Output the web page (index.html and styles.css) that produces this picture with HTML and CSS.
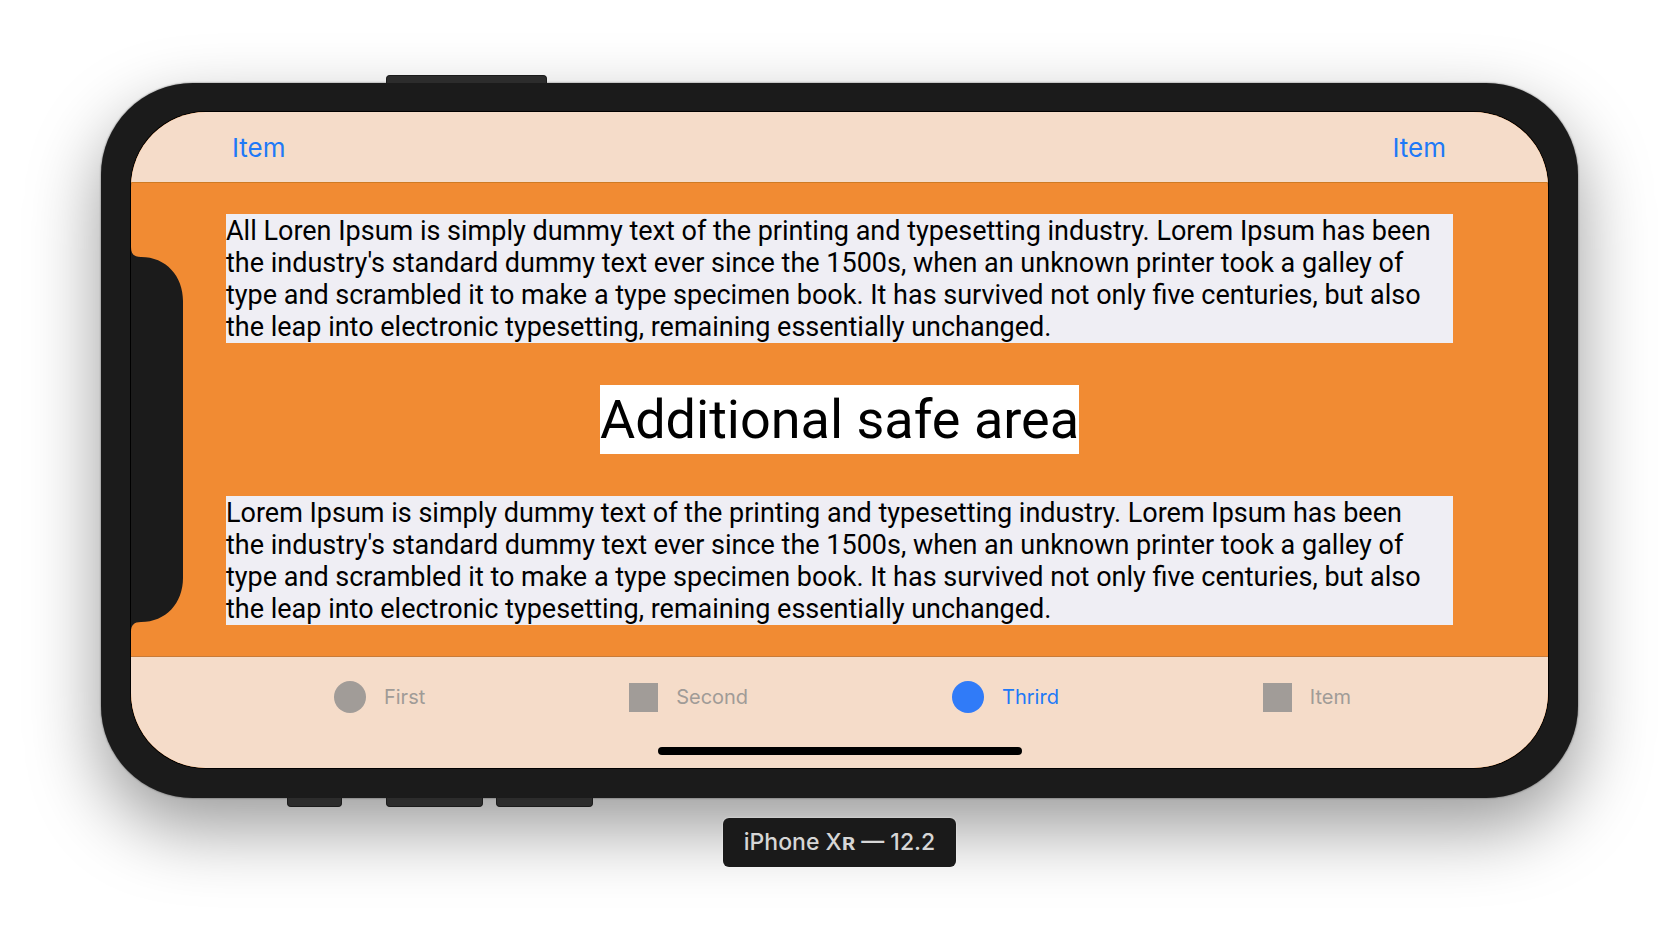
FILE: index.html
```html
<!DOCTYPE html>
<html lang="en">
<head>
<meta charset="utf-8">
<title>iPhone XR — 12.2</title>
<link rel="stylesheet" href="styles.css">
</head>
<body>
<main class="stage">
  <div class="phone">
    <span class="key key-side"></span>
    <span class="key key-mute"></span>
    <span class="key key-up"></span>
    <span class="key key-down"></span>
    <div class="screen">
      <header class="navbar">
        <button class="nav-item" type="button">Item</button>
        <button class="nav-item" type="button">Item</button>
      </header>
      <section class="content">
        <p class="copy">All Loren Ipsum is simply dummy text of the printing and typesetting industry. Lorem Ipsum has been<br>the industry's standard dummy text ever since the 1500s, when an unknown printer took a galley of<br>type and scrambled it to make a type specimen book. It has survived not only five centuries, but also<br>the leap into electronic typesetting, remaining essentially unchanged.</p>
        <h1 class="title">Additional safe area</h1>
        <p class="copy">Lorem Ipsum is simply dummy text of the printing and typesetting industry. Lorem Ipsum has been<br>the industry's standard dummy text ever since the 1500s, when an unknown printer took a galley of<br>type and scrambled it to make a type specimen book. It has survived not only five centuries, but also<br>the leap into electronic typesetting, remaining essentially unchanged.</p>
      </section>
      <footer class="bottom">
        <nav class="tabs">
          <button class="tab" type="button"><span class="icon circle"></span>First</button>
          <button class="tab" type="button"><span class="icon square"></span>Second</button>
          <button class="tab active" type="button"><span class="icon circle"></span>Thrird</button>
          <button class="tab" type="button"><span class="icon square"></span>Item</button>
        </nav>
        <div class="home"></div>
      </footer>
      <svg class="notch" width="52" height="385" viewBox="0 0 52 385" aria-hidden="true">
        <path d="M0 0C0 7 3 10 10 10C35 10 52 29 52 54V331C52 356 35 375 10 375C3 375 0 378 0 385Z"/>
      </svg>
    </div>
  </div>
  <div class="device">iPhone X<span class="small-r">ʀ</span> — 12.2</div>
</main>
</body>
</html>
```
FILE: styles.css
```css
* { box-sizing: border-box; }

body {
  margin: 0;
  background: #fff;
  color: #000;
  font-family: Inter, "Liberation Sans", sans-serif;
}

button {
  border: 0;
  padding: 0;
  background: none;
  font: inherit;
  color: inherit;
}

.stage {
  display: flex;
  flex-direction: column;
  align-items: center;
  gap: 20px;
  padding: 83px 101px 77px;
}

.phone {
  position: relative;
  align-self: stretch;
  padding: 29px 30px 30px;
  border-radius: 92px;
  background: #1b1b1b;
  box-shadow: 0 0 2px rgba(0, 0, 0, 0.6), 0 30px 72px rgba(0, 0, 0, 0.4);
}

.key {
  position: absolute;
  top: 100%;
  height: 9px;
  border: 1px solid #1b1b1b;
  border-top: 0;
  border-radius: 0 0 4px 4px;
  background: #2c2c2c;
}

.key-side {
  top: auto;
  bottom: 100%;
  left: 285px;
  width: 161px;
  height: 8px;
  border-top: 1px solid #1b1b1b;
  border-bottom: 0;
  border-radius: 4px 4px 0 0;
}

.key-mute { left: 186px; width: 55px; }
.key-up { left: 285px; width: 97px; }
.key-down { left: 395px; width: 97px; }

.screen {
  position: relative;
  overflow: hidden;
  border-radius: 75px;
  background: #f18b33;
  box-shadow: 0 0 0 1px #000;
}

.navbar {
  display: flex;
  justify-content: space-between;
  align-items: center;
  height: 71px;
  padding: 2px 102px 0 101px;
  background: #f5dcc9;
  border-bottom: 1px solid #cf7b24;
}

.nav-item {
  font-size: 26px;
  line-height: 32px;
  color: #2079f7;
}

.content {
  display: flex;
  flex-direction: column;
  align-items: center;
  gap: 42px;
  padding: 31px 95px;
}

.copy {
  align-self: stretch;
  margin: 0;
  padding-top: 1px;
  background: #efeef4;
  font-family: Roboto, Inter, sans-serif;
  font-size: 27px;
  line-height: 32px;
  white-space: nowrap;
}

.title {
  margin: 0;
  padding-top: 1px;
  background: #fff;
  font-family: Roboto, Inter, sans-serif;
  font-size: 54px;
  font-weight: 400;
  line-height: 68px;
}

.bottom {
  display: flex;
  flex-direction: column;
  align-items: center;
  gap: 34px;
  padding: 24px 95px 13px;
  background: #f5dcc9;
  border-top: 1px solid #c97b38;
}

.tabs {
  display: flex;
  align-self: stretch;
  justify-content: space-around;
  padding-left: 6px;
}

.tab {
  display: flex;
  align-items: center;
  gap: 18px;
  height: 32px;
  font-size: 20px;
  color: #a09b97;
}

.icon { background: #a19c98; }
.circle { width: 32px; height: 32px; border-radius: 50%; }
.square { width: 29px; height: 29px; }

.tab.active { color: #2079f7; }
.active .icon { background: #307bf8; }

.home {
  width: 364px;
  height: 8px;
  border-radius: 4px;
  background: #000;
}

.notch {
  position: absolute;
  top: calc(50% - 193px);
  left: 0;
  fill: #1b1b1b;
}

.device {
  position: relative;
  padding: 9px 21px;
  border-radius: 6px;
  background: #1a1a1a;
  box-shadow: 0 0 2px rgba(255, 255, 255, 0.7);
  font-size: 23px;
  line-height: 31px;
  font-weight: 500;
  color: #d6d6d6;
}

.small-r { font-weight: 700; }
```
